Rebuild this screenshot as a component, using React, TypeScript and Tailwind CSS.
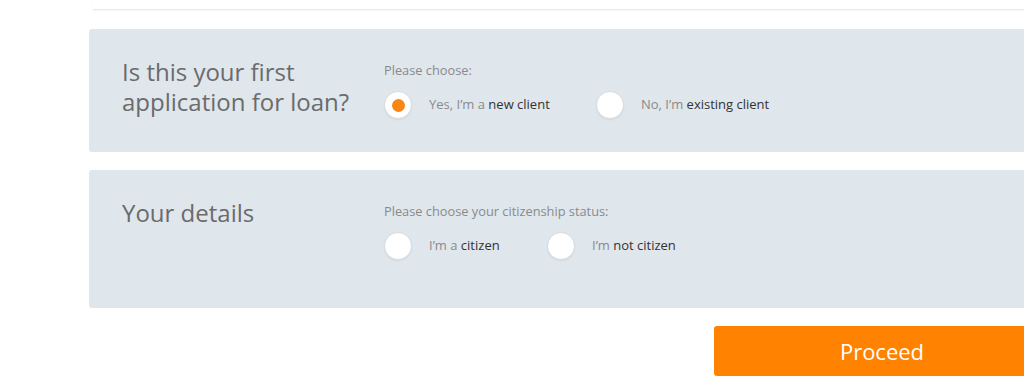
import React, { useState } from 'react'

type Option = { value: string; prefix: string; strong: string }

function Radio({ checked, onClick, children, width }: { checked: boolean; onClick: () => void; children: React.ReactNode; width: string }) {
  return (
    <button type="button" onClick={onClick} className={`flex items-center text-left ${width}`}>
      <span className="flex h-[28px] w-[28px] shrink-0 items-center justify-center rounded-full border border-[#d8dde2] bg-white shadow-[0_1px_2px_rgba(0,0,0,0.06)]">
        {checked && <span className="h-[13px] w-[13px] rounded-full bg-[#f98512]" />}
      </span>
      <span className="ml-[17px] text-[13px] text-[#8a8a8a]">{children}</span>
    </button>
  )
}

function Panel({
  title,
  label,
  options,
  widths,
  value,
  onChange,
  height,
}: {
  title: React.ReactNode
  label: string
  options: Option[]
  widths: string[]
  value: string | null
  onChange: (v: string) => void
  height: string
}) {
  return (
    <div className={`flex rounded-[3px] bg-[#dfe6ec] pl-[33px] pt-[28px] ${height}`}>
      <div className="w-[262px] text-[24px] leading-[30px] text-[#6b6b6b]">{title}</div>
      <div className="pt-[5px]">
        <div className="text-[12.8px] leading-[16px] text-[#8a8a8a]">{label}</div>
        <div className="mt-[13px] flex">
          {options.map((o, i) => (
            <Radio key={o.value} checked={value === o.value} onClick={() => onChange(o.value)} width={widths[i]}>
              {o.prefix}
              <span className="text-[#333]">{o.strong}</span>
            </Radio>
          ))}
        </div>
      </div>
    </div>
  )
}

export default function App() {
  const [client, setClient] = useState<string | null>('new')
  const [citizen, setCitizen] = useState<string | null>(null)

  return (
    <div className="h-[379px] w-[1024px] overflow-hidden bg-white" style={{ fontFamily: '"Open Sans", Lato, sans-serif' }}>
      <div className="ml-[89px] w-[961px]">
        {/* bottom of previous card */}
        <div className="ml-[4px] h-[10px] border-b border-[#e6e8ea] shadow-[0_1px_2px_rgba(0,0,0,0.04)]" />

        <div className="mt-[19px]">
          <Panel
            height="h-[123px]"
            title={
              <>
                Is this your first
                <br />
                application for loan?
              </>
            }
            label="Please choose:"
            options={[
              { value: 'new', prefix: 'Yes, I\u2019m a ', strong: 'new client' },
              { value: 'existing', prefix: 'No, I\u2019m ', strong: 'existing client' },
            ]}
            widths={['w-[212px]', 'w-[200px]']}
            value={client}
            onChange={setClient}
          />
        </div>

        <div className="mt-[18px]">
          <Panel
            height="h-[138px]"
            title="Your details"
            label="Please choose your citizenship status:"
            options={[
              { value: 'citizen', prefix: 'I\u2019m a ', strong: 'citizen' },
              { value: 'not', prefix: 'I\u2019m ', strong: 'not citizen' },
            ]}
            widths={['w-[163px]', 'w-[160px]']}
            value={citizen}
            onChange={setCitizen}
          />
        </div>

        <div className="mt-[18px] flex justify-end">
          <button className="h-[50px] w-[336px] rounded-[3px] bg-[#ff8200] text-[22px] text-white">Proceed</button>
        </div>
      </div>
    </div>
  )
}
